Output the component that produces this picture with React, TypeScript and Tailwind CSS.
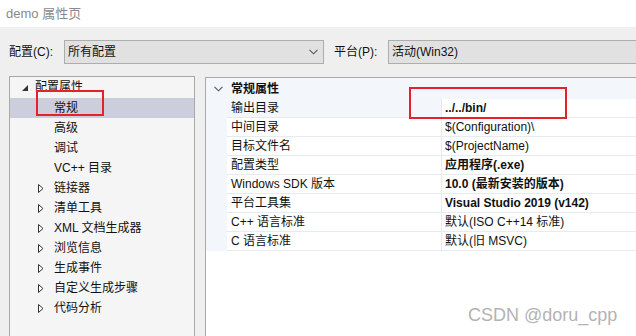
import React from "react";

type TreeItem = {
  label: string;
  level: 0 | 1 | 2;
  arrow?: "open" | "closed";
  selected?: boolean;
};

type Prop = {
  name: string;
  value: string;
  bold?: boolean;
};

const tree: TreeItem[] = [
  { label: "配置属性", level: 0, arrow: "open" },
  { label: "常规", level: 2, selected: true },
  { label: "高级", level: 2 },
  { label: "调试", level: 2 },
  { label: "VC++ 目录", level: 2 },
  { label: "链接器", level: 1, arrow: "closed" },
  { label: "清单工具", level: 1, arrow: "closed" },
  { label: "XML 文档生成器", level: 1, arrow: "closed" },
  { label: "浏览信息", level: 1, arrow: "closed" },
  { label: "生成事件", level: 1, arrow: "closed" },
  { label: "自定义生成步骤", level: 1, arrow: "closed" },
  { label: "代码分析", level: 1, arrow: "closed" },
];

const props: Prop[] = [
  { name: "输出目录", value: "../../bin/", bold: true },
  { name: "中间目录", value: "$(Configuration)\\" },
  { name: "目标文件名", value: "$(ProjectName)" },
  { name: "配置类型", value: "应用程序(.exe)", bold: true },
  { name: "Windows SDK 版本", value: "10.0 (最新安装的版本)", bold: true },
  { name: "平台工具集", value: "Visual Studio 2019 (v142)", bold: true },
  { name: "C++ 语言标准", value: "默认(ISO C++14 标准)" },
  { name: "C 语言标准", value: "默认(旧 MSVC)" },
];

function Chevron() {
  return (
    <svg width="9" height="6" viewBox="0 0 9 6" className="shrink-0">
      <path d="M0.5 0.8 L4.5 4.8 L8.5 0.8" fill="none" stroke="#555" strokeWidth="1.1" />
    </svg>
  );
}

function OpenArrow() {
  return (
    <svg width="6" height="6" viewBox="0 0 6 6">
      <polygon points="6,0 6,6 0,6" fill="#333" />
    </svg>
  );
}

function ClosedArrow() {
  return (
    <svg width="6" height="9" viewBox="0 0 6 9">
      <polygon points="0.5,0.5 5,4.5 0.5,8.5" fill="#fff" stroke="#333" strokeWidth="1" />
    </svg>
  );
}

export default function App() {
  return (
    <div className='relative w-[636px] h-[336px] overflow-hidden bg-[#efefef] text-[12px] text-[#111] font-["Liberation_Sans","Noto_Sans_CJK_SC",sans-serif]'>
      {/* title */}
      <div className="h-[27px] bg-white flex items-center pl-[6px] text-[#8a8a8a] text-[13px]">demo 属性页</div>

      {/* config row */}
      <div className="mt-[13px] h-[24px] flex items-center">
        <div className="w-[64px] shrink-0 pl-[9px]">配置(C):</div>
        <div className="w-[260px] shrink-0 h-[24px] bg-[#e1e1e1] border border-[#adadad] flex items-center justify-between pl-[3px] pr-[5px]">
          <span>所有配置</span>
          <Chevron />
        </div>
        <div className="w-[64px] shrink-0 pl-[10px]">平台(P):</div>
        <div className="w-[300px] shrink-0 h-[24px] bg-[#e1e1e1] border border-[#adadad] flex items-center pl-[3px]">
          <span>活动(Win32)</span>
        </div>
      </div>

      {/* panels */}
      <div className="mt-[12px] flex items-start">
        <div className="ml-[9px] w-[186px] shrink-0 h-[300px] bg-[#f5f5f5] border border-[#a9a9a9] pt-[1px]">
          {tree.map((t) => (
            <div
              key={t.label}
              className={`h-[20px] flex items-center ${t.selected ? "bg-[#cccedb]" : ""}`}
            >
              {t.level === 0 && (
                <>
                  <div className="w-[25px] flex justify-end pr-[7px] -mt-[1px]"><OpenArrow /></div>
                  <span className="-mt-[2px]">{t.label}</span>
                </>
              )}
              {t.level === 1 && (
                <>
                  <div className="w-[44px] flex justify-end pr-[10px]"><ClosedArrow /></div>
                  <span>{t.label}</span>
                </>
              )}
              {t.level === 2 && (
                <>
                  <div className="w-[44px]" />
                  <span>{t.label}</span>
                </>
              )}
            </div>
          ))}
        </div>

        <div className="ml-[10px] mt-[1px] flex-1 h-[300px] bg-white border-t border-l border-[#a9a9a9]">
          <div className="bg-[#f3f6fb]">
            <div className="h-[21px] flex items-center">
              <div className="w-[22px] flex justify-center pl-[2px]"><Chevron /></div>
              <span className="font-bold pl-[3px]">常规属性</span>
            </div>
            {props.map((p, i) => (
              <div key={p.name} className="h-[19px] flex pl-[21px]">
                <div className={`w-[215px] flex items-center pl-[4px] border-b border-r border-[#e6eaf1] ${i === 0 ? "bg-[#f3f6fb]" : "bg-white"}`}>
                  {p.name}
                </div>
                <div className={`flex-1 flex items-center pl-[3px] bg-white border-b border-[#e6eaf1] ${p.bold ? "font-bold" : ""}`}>
                  {p.value}
                </div>
              </div>
            ))}
          </div>
        </div>
      </div>

      {/* annotations */}
      <div className="absolute left-[36px] top-[90px] w-[68px] h-[26px] border-2 border-[#e8202a]" />
      <div className="absolute left-[409px] top-[87px] w-[158px] h-[32px] border-2 border-[#e8202a]" />
      <div className="absolute left-[468px] top-[302px] text-[18px] text-[#b3b3b3] font-['Liberation_Sans',sans-serif]">CSDN @doru_cpp</div>
    </div>
  );
}
